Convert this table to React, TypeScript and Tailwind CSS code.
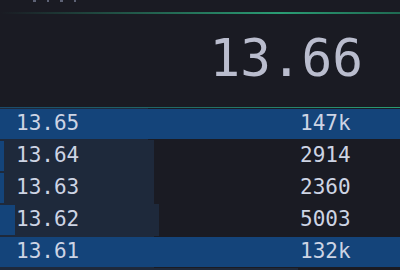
const mono = { fontFamily: '"DejaVu Sans Mono", "Liberation Mono", monospace' };

type Level = {
  price: string;
  size: string;
  depth: number;
  own: number;
  hot?: boolean;
};

const levels: Level[] = [
  { price: '13.65', size: '147k', depth: 148, own: 0, hot: true },
  { price: '13.64', size: '2914', depth: 154, own: 4 },
  { price: '13.63', size: '2360', depth: 154, own: 4 },
  { price: '13.62', size: '5003', depth: 159, own: 15 },
  { price: '13.61', size: '132k', depth: 154, own: 0, hot: true },
];

function Row({ level }: { level: Level }) {
  return (
    <div className="relative h-8 shrink-0">
      <div className="absolute left-0 inset-y-0 bg-[#1e293b]" style={{ width: level.depth }} />
      {level.own > 0 && (
        <div className="absolute left-0 inset-y-px bg-[#14447a]" style={{ width: level.own }} />
      )}
      {level.hot && <div className="absolute inset-x-0 inset-y-px bg-[#14447a]" />}
      <div className="relative flex h-full items-center pl-4 text-[21px] text-[#cdd4e4]" style={mono}>
        <span className="w-[284px]">{level.price}</span>
        <span>{level.size}</span>
      </div>
    </div>
  );
}

export default function App() {
  return (
    <div className="flex h-[270px] w-[400px] flex-col overflow-hidden bg-[#1a1b23]">
      {/* tail of the row scrolled above */}
      <div className="flex h-3 shrink-0 gap-[11px] pl-[33px]">
        <span className="h-[2px] w-[3px] bg-[#5d6275]" />
        <span className="h-[2px] w-[2px] bg-[#5d6275]" />
        <span className="h-[2px] w-[3px] bg-[#5d6275]" />
        <span className="h-[2px] w-[2px] bg-[#5d6275]" />
      </div>
      <div className="h-[2px] shrink-0 bg-gradient-to-r from-transparent via-[#2a9d74] via-70% to-[#1f6a52]" />
      <div className="flex h-[93px] shrink-0 items-center justify-end pr-[37px] pb-[5px]">
        <span className="text-[51px] leading-none text-[#babdce]" style={mono}>
          13.66
        </span>
      </div>
      <div className="h-px shrink-0 bg-gradient-to-r from-[#1b4a6a] via-[#236f64] to-[#2a9d74]" />
      {levels.map((l) => (
        <Row key={l.price} level={l} />
      ))}
      <div className="relative h-8 shrink-0">
        <div className="absolute left-0 inset-y-0 w-[298px] bg-[#1e293b]" />
      </div>
    </div>
  );
}
